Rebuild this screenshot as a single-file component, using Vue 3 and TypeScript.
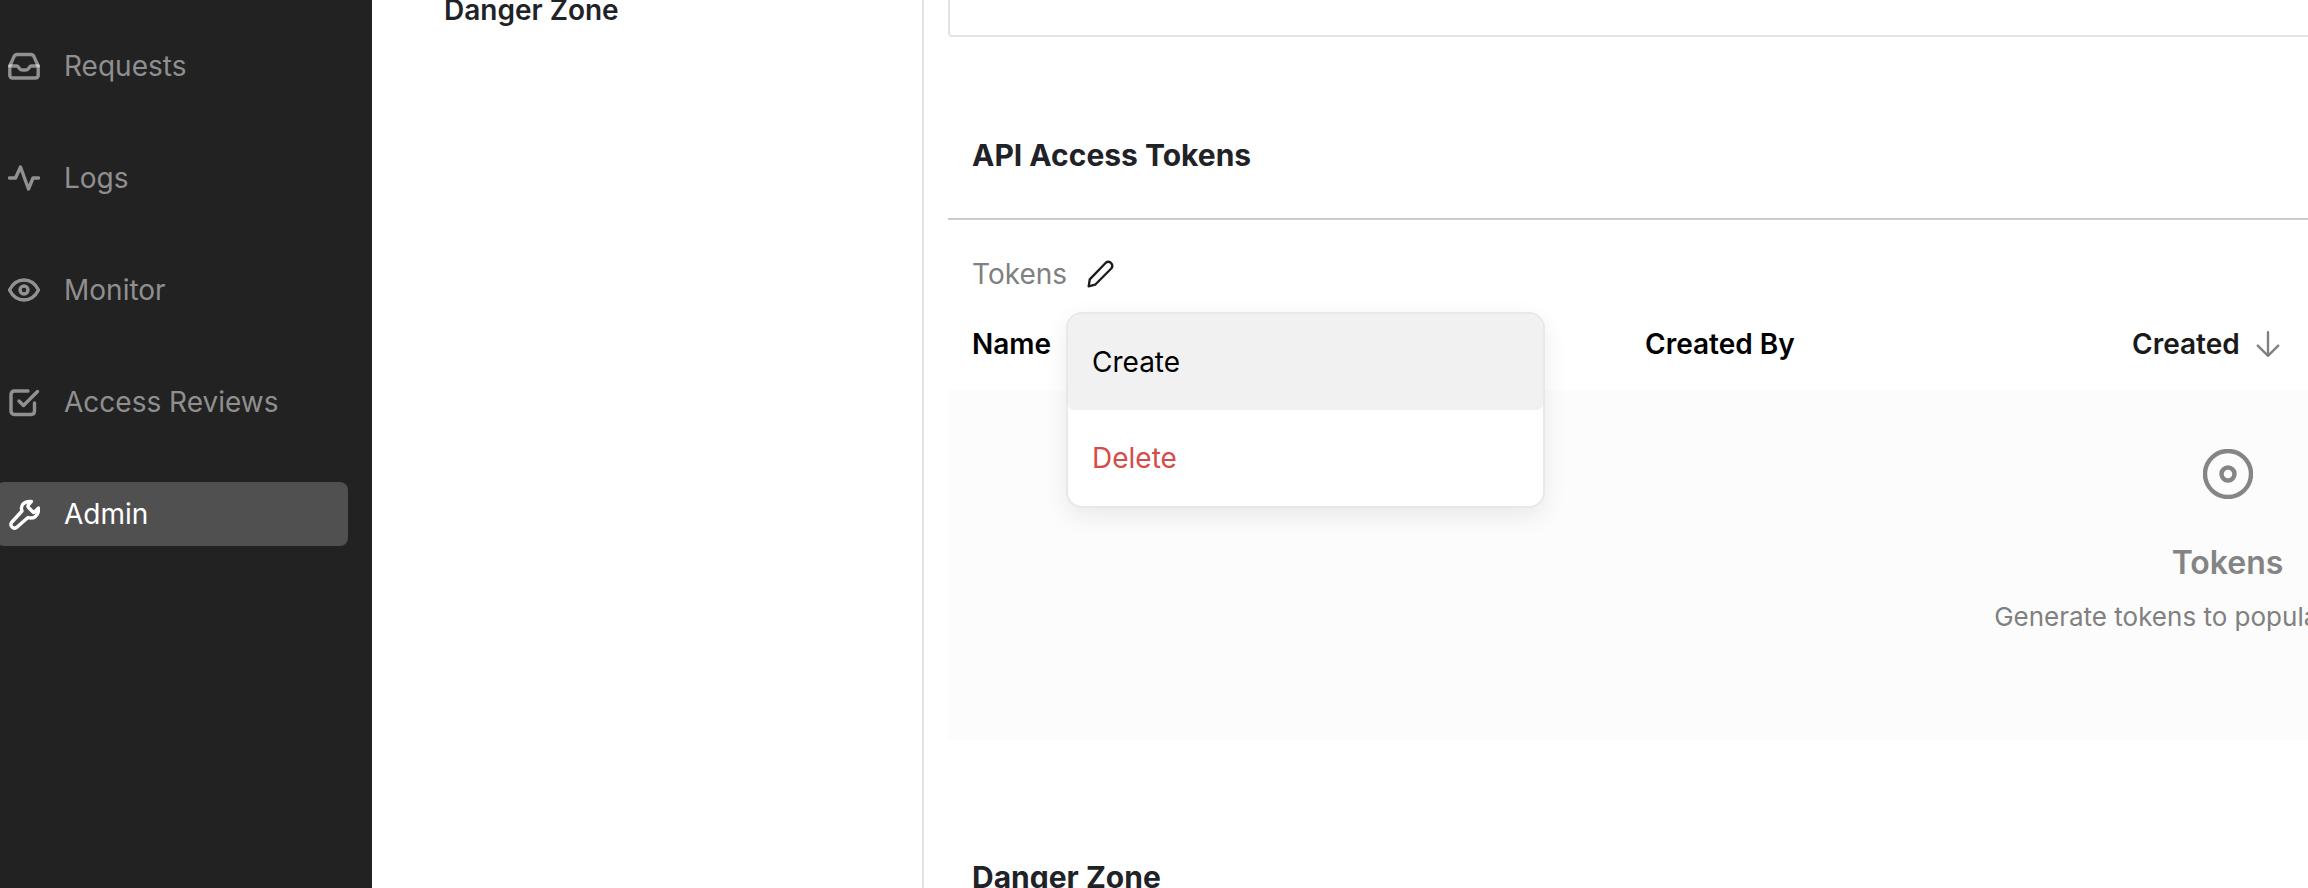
<script setup lang="ts">
interface NavItem {
  label: string
  icon: string
  active?: boolean
}

const navItems: NavItem[] = [
  { label: 'Requests', icon: 'inbox' },
  { label: 'Logs', icon: 'pulse' },
  { label: 'Monitor', icon: 'eye' },
  { label: 'Access Reviews', icon: 'check' },
  { label: 'Admin', icon: 'wrench', active: true },
]
</script>

<template>
  <div class="page">
    <aside class="sidebar">
      <a v-for="item in navItems" :key="item.label" class="nav-item" :class="{ active: item.active }">
        <svg class="nav-icon" viewBox="0 0 32 32" fill="none" stroke-width="3.4" stroke-linecap="round" stroke-linejoin="round">
          <template v-if="item.icon === 'inbox'">
            <path d="M1.8 16 L6 6.6 Q7 4.5 9.4 4.5 H22.6 Q25 4.5 26 6.6 L30.2 16" />
            <path d="M1.8 16 H8.6 Q9.8 16 10.6 17.2 L11.4 18.4 Q12.6 20 14.6 20 H17.4 Q19.4 20 20.6 18.4 L21.4 17.2 Q22.2 16 23.4 16 H30.2 V25 Q30.2 28 27.2 28 H4.8 Q1.8 28 1.8 25 Z" />
          </template>
          <path v-else-if="item.icon === 'pulse'" d="M1.5 16 H7.5 L12.5 5 L20.5 27 L25 16 H30.5" />
          <template v-else-if="item.icon === 'eye'">
            <path d="M1.5 16 Q6.5 6 16 6 Q25.5 6 30.5 16 Q25.5 26 16 26 Q6.5 26 1.5 16 Z" />
            <circle cx="16" cy="16" r="4" />
          </template>
          <template v-else-if="item.icon === 'check'">
            <path d="M26.5 17 V25 Q26.5 28.5 23 28.5 H6.5 Q3 28.5 3 25 V8.5 Q3 5 6.5 5 H20" />
            <path d="M11 15 L15.5 19.5 L29.5 5.5" />
          </template>
          <path v-else d="M20.5 9.5 L25 14 Q25.8 14.7 26.5 14 L30.5 10 Q31 15.5 27.5 18.5 Q24 21 20 19.5 L8.5 29.5 Q6 31 4 29 Q2 27 3.5 24.5 L14 13 Q12.5 9 15 6 Q18 3 23.5 3.5 L20 7.5 Q19.8 8.8 20.5 9.5 Z" />
        </svg>
        <span>{{ item.label }}</span>
      </a>
    </aside>

    <nav class="subnav">
      <div class="subnav-link">Danger Zone</div>
    </nav>

    <main class="content">
      <div class="top-box"></div>

      <section class="section">
        <h2 class="section-title">API Access Tokens</h2>
        <div class="tokens-bar">
          <span>Tokens</span>
          <svg class="pencil" viewBox="0 0 28 28" fill="none" stroke="#1c1c1c" stroke-width="2.2" stroke-linecap="round" stroke-linejoin="round">
            <path d="M2.5 25.5 L3.5 19 L18.5 3.5 Q20.8 1.6 23.3 3.7 Q25.6 6 23.8 8.6 L8.5 24 Z" />
          </svg>
        </div>

        <div class="table-area">
          <div class="table-head">
            <span>Name</span>
            <span>Created By</span>
            <span class="sort-col">
              Created
              <svg class="sort-icon" viewBox="0 0 26 26" fill="none" stroke="#808080" stroke-width="2.2" stroke-linecap="round" stroke-linejoin="round">
                <path d="M13 2 V24 M3.5 14.5 L13 24 L22.5 14.5" />
              </svg>
            </span>
          </div>

          <div class="empty">
            <svg class="empty-icon" viewBox="0 0 50 50" fill="none" stroke="#858585" stroke-width="4.4">
              <circle cx="25" cy="25" r="23" />
              <circle cx="25" cy="25" r="6.5" />
            </svg>
            <div class="empty-title">Tokens</div>
            <div class="empty-text">Generate tokens to populate this table</div>
          </div>

          <div class="menu">
            <div class="menu-item hovered">Create</div>
            <div class="menu-item danger">Delete</div>
          </div>
        </div>

        <h2 class="danger-title">Danger Zone</h2>
      </section>
    </main>
  </div>
</template>

<style scoped>
.page {
  display: flex;
  width: 2308px;
  height: 888px;
  overflow: hidden;
  background: #ffffff;
  font-family: Inter, "Liberation Sans", sans-serif;
  font-size: 28px;
}

.sidebar {
  flex: 0 0 372px;
  display: flex;
  flex-direction: column;
  gap: 48px;
  box-sizing: border-box;
  height: 888px;
  padding: 34px 24px 0 0;
  background: #222222;
}

.nav-item {
  display: flex;
  align-items: center;
  gap: 24px;
  height: 64px;
  margin-left: -4px;
  padding-left: 12px;
  border-radius: 8px;
  color: #8f8f8f;
}

.nav-item.active {
  background: #505050;
  color: #ffffff;
}

.nav-icon {
  flex: 0 0 32px;
  width: 32px;
  height: 32px;
  stroke: rgba(255, 255, 255, 0.5);
}

.nav-item.active .nav-icon {
  stroke: #ffffff;
}

.subnav {
  flex: 0 0 552px;
  box-sizing: border-box;
  height: 900px;
  margin-top: -10px;
  padding-left: 72px;
  border-right: 2px solid #e3e3e3;
}

.subnav-link {
  height: 40px;
  line-height: 40px;
  font-weight: 600;
  color: #1f2328;
}

.content {
  flex: 0 0 auto;
  width: 2559px;
  margin-left: 24px;
}

.top-box {
  height: 37px;
  box-sizing: border-box;
  border: 2px solid #e3e3e3;
  border-top: 0;
  border-radius: 0 0 4px 4px;
}

.section-title {
  box-sizing: border-box;
  height: 183px;
  margin: 0;
  padding: 98px 0 0 24px;
  border-bottom: 2px solid #cccccc;
  font-size: 30px;
  line-height: 40px;
  font-weight: 700;
  color: #1f2328;
}

.tokens-bar {
  display: flex;
  align-items: center;
  gap: 19px;
  height: 108px;
  box-sizing: border-box;
  padding: 0 0 0 24px;
  color: #808080;
}

.pencil {
  width: 30px;
  height: 30px;
}

.table-area {
  position: relative;
}

.table-head {
  display: grid;
  grid-template-columns: 673px 487px auto;
  align-items: start;
  height: 62px;
  padding: 0 0 0 24px;
  line-height: 32px;
  font-weight: 600;
  color: #000000;
}

.table-head > span {
  white-space: nowrap;
}

.sort-col {
  display: flex;
  align-items: center;
  gap: 14px;
  color: #1a1a1a;
}

.sort-icon {
  width: 28px;
  height: 28px;
}

.empty {
  display: flex;
  flex-direction: column;
  align-items: center;
  height: 350px;
  box-sizing: border-box;
  padding-top: 59px;
  background: #fcfcfc;
}

.empty-icon {
  width: 50px;
  height: 50px;
}

.empty-title {
  margin-top: 44px;
  font-size: 32px;
  line-height: 40px;
  font-weight: 600;
  color: #848484;
}

.empty-text {
  margin-top: 14px;
  font-size: 26px;
  line-height: 40px;
  color: #808080;
  white-space: nowrap;
}

.menu {
  position: absolute;
  left: 118px;
  top: -16px;
  width: 479px;
  box-sizing: border-box;
  border: 2px solid #e8e8e8;
  border-radius: 16px;
  background: #ffffff;
  box-shadow: 0 8px 24px rgba(0, 0, 0, 0.08);
}

.menu-item {
  display: flex;
  align-items: center;
  height: 96px;
  padding-left: 24px;
  color: #000000;
}

.menu-item.hovered {
  border-radius: 14px 14px 6px 6px;
  background: #f1f1f1;
}

.menu-item.danger {
  color: #d74c48;
}

.danger-title {
  margin: 117px 0 0;
  padding-left: 24px;
  font-size: 30px;
  line-height: 40px;
  font-weight: 700;
  color: #1f2328;
}
</style>
